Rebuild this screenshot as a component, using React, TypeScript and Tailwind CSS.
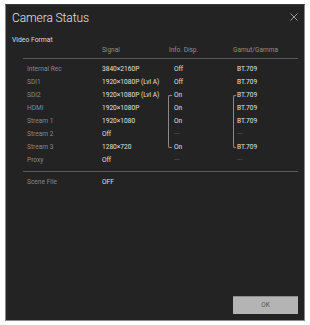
import React from "react";

const rows: { label: string; signal: string; info: string; gamut: string }[] = [
  { label: "Internal Rec", signal: "3840×2160P", info: "Off", gamut: "BT.709" },
  { label: "SDI1", signal: "1920×1080P (Lvl A)", info: "Off", gamut: "BT.709" },
  { label: "SDI2", signal: "1920×1080P (Lvl A)", info: "On", gamut: "BT.709" },
  { label: "HDMI", signal: "1920×1080P", info: "On", gamut: "BT.709" },
  { label: "Stream 1", signal: "1920×1080", info: "On", gamut: "BT.709" },
  { label: "Stream 2", signal: "Off", info: "---", gamut: "---" },
  { label: "Stream 3", signal: "1280×720", info: "On", gamut: "BT.709" },
  { label: "Proxy", signal: "Off", info: "---", gamut: "---" },
];

function Val({ v }: { v: string }) {
  return (
    <span className={v === "---" ? "text-[#5e5e5e]" : "text-[#e0e0e0]"}>{v}</span>
  );
}

export default function App() {
  return (
    <div
      className="w-[310px] h-[325px] bg-white pl-[5px] pt-[4px]"
      style={{ fontFamily: "Roboto, 'Noto Sans', sans-serif" }}
    >
      <div className="w-[300px] h-[317px] border border-[#8a8a8a] border-t-[#3a3a3a] bg-[#232323] flex flex-col">
        <div className="flex justify-between items-start pt-[4px] pl-[6px] pr-[6px]">
          <div className="text-[12px] leading-[18px] font-light tracking-[-0.1px] text-[#e2e2e2]">Camera Status</div>
          <svg width="8" height="8" viewBox="0 0 8 8" className="mt-[4px]">
            <path d="M0.5 0.5 L7.5 7.5 M7.5 0.5 L0.5 7.5" stroke="#9a9a9a" strokeWidth="1" />
          </svg>
        </div>
        <div className="mt-[8px] pl-[6px] text-[6.8px] leading-[10px] text-[#dcdcdc]">Video Format</div>
        <div className="ml-[21px] grid grid-cols-[75px_66px_65px_1fr] text-[6.5px] leading-[10px] text-[#8f8f8f]">
          <div />
          <div>Signal</div>
          <div className="pl-[1px]">Info. Disp.</div>
          <div className="pl-[0px]">Gamut/Gamma</div>
        </div>
        <div className="mt-[3px] ml-[17px] mr-[6px] h-px bg-[#5a5a5a]" />
        <div className="mt-[4px] ml-[21px] grid grid-cols-[75px_66px_65px_1fr] auto-rows-[13px] text-[6.6px] leading-[13px]">
          {rows.map((r, i) => (
            <React.Fragment key={r.label}>
              <div className="text-[#888]" style={{ gridRow: i + 1, gridColumn: 1 }}>{r.label}</div>
              <div className="text-[#e0e0e0]" style={{ gridRow: i + 1, gridColumn: 2 }}>{r.signal}</div>
              <div className="pl-[6px]" style={{ gridRow: i + 1, gridColumn: 3 }}><Val v={r.info} /></div>
              <div className="pl-[4px]" style={{ gridRow: i + 1, gridColumn: 4 }}><Val v={r.gamut} /></div>
            </React.Fragment>
          ))}
          <div className="col-start-3 row-start-3 row-span-5 self-start mt-[6px] h-[53px] w-[4px] border-l border-t border-b border-[#8a8a8a] rounded-l-[2px]" />
          <div className="col-start-4 row-start-3 row-span-5 self-start mt-[6px] h-[53px] w-[3px] border-l border-t border-b border-[#8a8a8a] rounded-l-[2px]" />
        </div>
        <div className="mt-[4px] ml-[17px] mr-[6px] h-px bg-[#5a5a5a]" />
        <div className="mt-[4px] ml-[21px] grid grid-cols-[75px_1fr] text-[6.6px] leading-[13px]">
          <div className="text-[#888]">Scene File</div>
          <div className="text-[#e0e0e0]">OFF</div>
        </div>
        <div className="mt-auto mb-[6px] mr-[6px] flex justify-end">
          <div className="w-[65px] h-[18px] bg-[#b4b4b4] border-t border-[#8c8c8c] flex items-center justify-center text-[6.5px] text-[#555]">
            OK
          </div>
        </div>
      </div>
    </div>
  );
}
